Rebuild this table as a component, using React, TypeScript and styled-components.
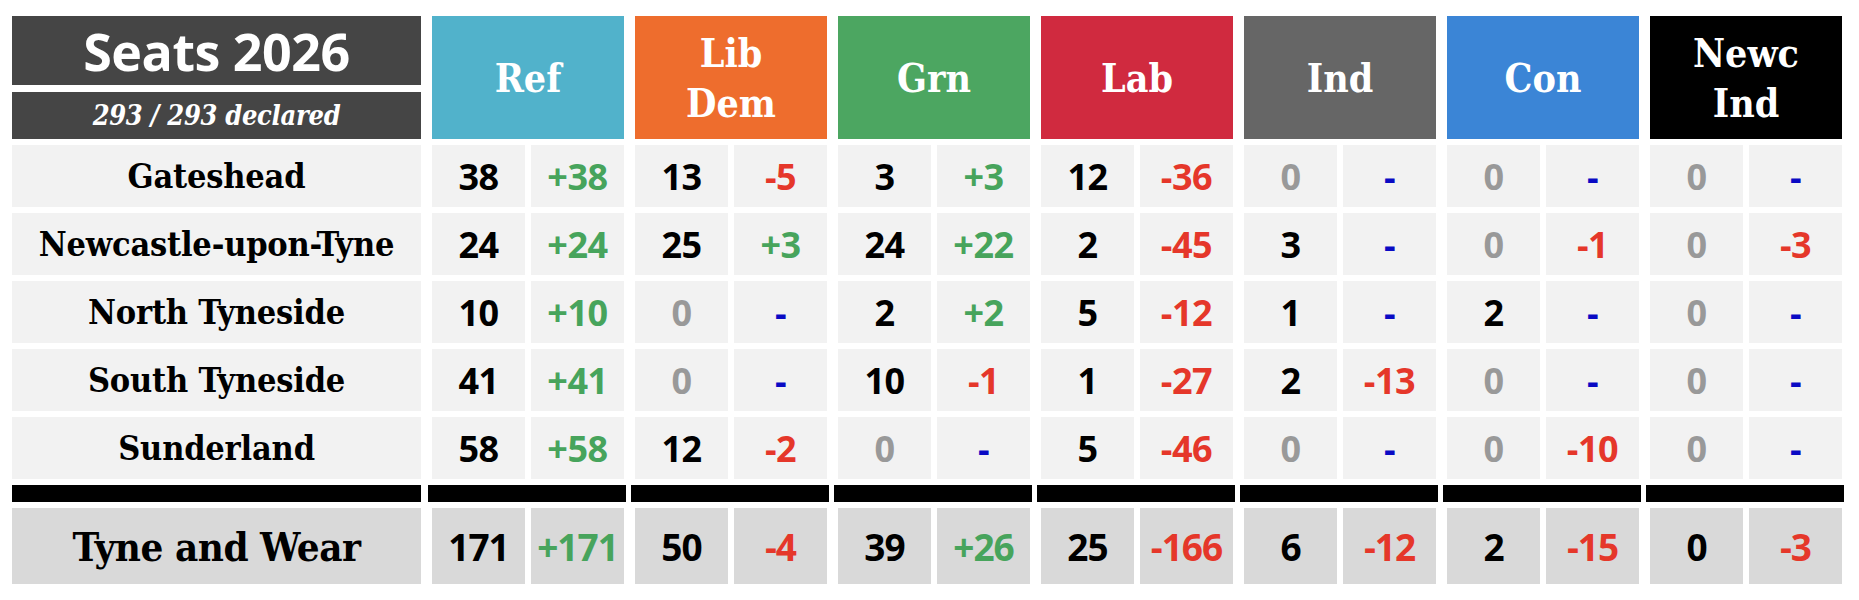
import React from "react";
import styled, { createGlobalStyle } from "styled-components";

const Global = createGlobalStyle`
  html, body { margin: 0; padding: 0; background: #ffffff; }
  body { font-family: "Open Sans", "DejaVu Sans", sans-serif; }
`;

const SLAB = `"DejaVu Serif Condensed", "DejaVu Serif", serif`;
const NUM = `"Open Sans", "Noto Sans", sans-serif`;

const Page = styled.div`
  padding: 16px 0 0 12px;
`;

const Table = styled.div`
  display: grid;
  grid-template-columns: 409px repeat(7, 192px);
  grid-template-rows: 123px repeat(5, 62px) 17px 76px;
  column-gap: 11px;
  row-gap: 6px;
`;

const LabelHead = styled.div`
  display: flex;
  flex-direction: column;
  gap: 7px;
`;

const Title = styled.div`
  height: 69px;
  background: #454545;
  color: #fff;
  display: flex;
  align-items: center;
  justify-content: center;
  font-family: "Open Sans", sans-serif;
  font-weight: 700;
  font-size: 52px;
  letter-spacing: -0.5px;
`;

const Subtitle = styled.div`
  flex: 1;
  background: #454545;
  color: #fff;
  display: flex;
  align-items: center;
  justify-content: center;
  font-family: ${SLAB};
  font-stretch: condensed;
  font-style: italic;
  font-weight: 700;
  font-size: 27px;
  letter-spacing: -0.3px;
`;

const PartyHead = styled.div<{ $bg: string }>`
  background: ${(p) => p.$bg};
  color: #fff;
  display: flex;
  align-items: center;
  justify-content: center;
  text-align: center;
  font-family: ${SLAB};
  font-stretch: condensed;
  font-weight: 700;
  font-size: 39px;
  line-height: 50px;
`;

const Name = styled.div<{ $total?: boolean }>`
  background: ${(p) => (p.$total ? "#d9d9d9" : "#f2f2f2")};
  color: #000;
  display: flex;
  align-items: center;
  justify-content: center;
  font-family: ${SLAB};
  font-stretch: condensed;
  font-weight: 700;
  font-size: ${(p) => (p.$total ? "40px" : "34px")};
  letter-spacing: ${(p) => (p.$total ? "-0.5px" : "-0.2px")};
`;

const Pair = styled.div`
  display: grid;
  grid-template-columns: 1fr 1fr;
  column-gap: 6px;
`;

const Num = styled.div<{ $total?: boolean; $color: string }>`
  background: ${(p) => (p.$total ? "#d9d9d9" : "#f2f2f2")};
  color: ${(p) => p.$color};
  display: flex;
  align-items: center;
  justify-content: center;
  font-family: ${NUM};
  font-weight: 700;
  font-size: ${(p) => (p.$total ? "37px" : "36px")};
  letter-spacing: ${(p) => (p.$total ? "-1px" : "-0.5px")};
`;

const Bar = styled.div<{ $party?: boolean }>`
  background: #000;
  margin: ${(p) => (p.$party ? "0 -2px 0 -4px" : "0")};
`;

const parties = [
  { name: "Ref", bg: "#51b2cb" },
  { name: "Lib\nDem", bg: "#ee6d2d" },
  { name: "Grn", bg: "#4ca661" },
  { name: "Lab", bg: "#d02a3f" },
  { name: "Ind", bg: "#666666" },
  { name: "Con", bg: "#3b85d6" },
  { name: "Newc\nInd", bg: "#000000" },
];

type Cell = [number, string];

const rows: { name: string; cells: Cell[] }[] = [
  { name: "Gateshead", cells: [[38, "+38"], [13, "-5"], [3, "+3"], [12, "-36"], [0, "-"], [0, "-"], [0, "-"]] },
  { name: "Newcastle-upon-Tyne", cells: [[24, "+24"], [25, "+3"], [24, "+22"], [2, "-45"], [3, "-"], [0, "-1"], [0, "-3"]] },
  { name: "North Tyneside", cells: [[10, "+10"], [0, "-"], [2, "+2"], [5, "-12"], [1, "-"], [2, "-"], [0, "-"]] },
  { name: "South Tyneside", cells: [[41, "+41"], [0, "-"], [10, "-1"], [1, "-27"], [2, "-13"], [0, "-"], [0, "-"]] },
  { name: "Sunderland", cells: [[58, "+58"], [12, "-2"], [0, "-"], [5, "-46"], [0, "-"], [0, "-10"], [0, "-"]] },
];

const total: { name: string; cells: Cell[] } = {
  name: "Tyne and Wear",
  cells: [[171, "+171"], [50, "-4"], [39, "+26"], [25, "-166"], [6, "-12"], [2, "-15"], [0, "-3"]],
};

const changeColor = (c: string) => {
  if (c === "-") return "#0a0ac4";
  if (c.startsWith("+")) return "#47a45c";
  return "#e5372a";
};

const Row = ({ name, cells, isTotal }: { name: string; cells: Cell[]; isTotal?: boolean }) => (
  <>
    <Name $total={isTotal}>{name}</Name>
    {cells.map(([seats, change], i) => (
      <Pair key={i}>
        <Num $total={isTotal} $color={!isTotal && seats === 0 ? "#999999" : "#000000"}>
          {seats}
        </Num>
        <Num $total={isTotal} $color={changeColor(change)}>
          {change}
        </Num>
      </Pair>
    ))}
  </>
);

export default function App() {
  return (
    <Page>
      <Global />
      <Table>
        <LabelHead>
          <Title>Seats 2026</Title>
          <Subtitle>293 / 293 declared</Subtitle>
        </LabelHead>
        {parties.map((p) => (
          <PartyHead key={p.name} $bg={p.bg}>
            <span>
              {p.name.split("\n").map((l, i) => (
                <div key={i}>{l}</div>
              ))}
            </span>
          </PartyHead>
        ))}
        {rows.map((r) => (
          <Row key={r.name} name={r.name} cells={r.cells} />
        ))}
        <Bar />
        {parties.map((p) => (
          <Bar key={p.name} $party />
        ))}
        <Row name={total.name} cells={total.cells} isTotal />
      </Table>
    </Page>
  );
}
